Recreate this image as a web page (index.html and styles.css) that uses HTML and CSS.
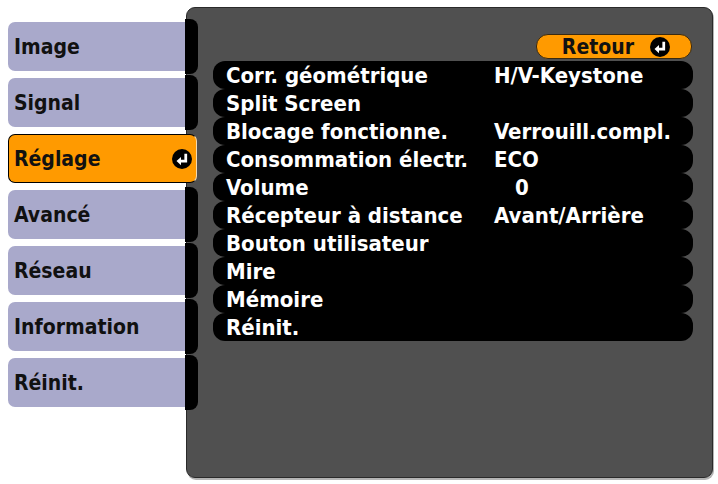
FILE: index.html
```html
<!DOCTYPE html>
<html lang="fr">
<head>
    <meta charset="UTF-8">
    <title>Réglage</title>
    <link rel="stylesheet" href="styles.css">
</head>
<body>
    <div class="screen">
        <ul class="tabs">
            <li class="tab"><span class="label">Image</span><span class="tail"></span></li>
            <li class="tab"><span class="label">Signal</span><span class="tail"></span></li>
            <li class="tab on"><span class="label">Réglage
                <svg class="enter" viewBox="0 0 16 16"><circle cx="8" cy="8" r="8"/><path d="M11 3.8V9.6H6.5" /><polygon points="3.6,9.6 7.2,6.3 7.2,12.9"/></svg>
            </span></li>
            <li class="tab"><span class="label">Avancé</span><span class="tail"></span></li>
            <li class="tab"><span class="label">Réseau</span><span class="tail"></span></li>
            <li class="tab"><span class="label">Information</span><span class="tail"></span></li>
            <li class="tab"><span class="label">Réinit.</span><span class="tail"></span></li>
        </ul>
        <div class="panel">
            <div class="retour">Retour
                <svg class="enter" viewBox="0 0 16 16"><circle cx="8" cy="8" r="8"/><path d="M11 3.8V9.6H6.5" /><polygon points="3.6,9.6 7.2,6.3 7.2,12.9"/></svg>
            </div>
            <ul class="rows">
                <li><span class="name">Corr. géométrique</span><span class="val">H/V-Keystone</span></li>
                <li><span class="name">Split Screen</span></li>
                <li><span class="name">Blocage fonctionne.</span><span class="val">Verrouill.compl.</span></li>
                <li><span class="name">Consommation électr.</span><span class="val">ECO</span></li>
                <li><span class="name">Volume</span><span class="val num">0</span></li>
                <li><span class="name">Récepteur à distance</span><span class="val">Avant/Arrière</span></li>
                <li><span class="name">Bouton utilisateur</span></li>
                <li><span class="name">Mire</span></li>
                <li><span class="name">Mémoire</span></li>
                <li><span class="name">Réinit.</span></li>
            </ul>
        </div>
    </div>
</body>
</html>
```
FILE: styles.css
```css
*{
    margin:0;
    padding:0;
}
ul li{
    list-style-type:none;
}
body{
    background:#fff;
    font-family:"DejaVu Sans Condensed","DejaVu Sans",sans-serif;
    font-weight:bold;
}
.screen{
    display:flex;
    padding:7px 5px 6px 8px;
    height:471px;
}
.tabs{
    width:190px;
    margin-top:15px;
    display:flex;
    flex-direction:column;
    gap:7px;
    position:relative;
    z-index:1;
}
.tab{
    display:flex;
    height:49px;
}
.tab .label{
    flex:1;
    display:flex;
    align-items:center;
    justify-content:space-between;
    padding-left:6px;
    background:#a9a9cb;
    color:#111;
    font-size:21px;
    border-radius:7px 0 0 7px;
}
.tab .tail{
    width:13px;
    margin:-3px 0;
    background:#000;
    border-radius:0 8px 8px 0;
}
.tab.on .label{
    background:#ff9a00;
    border:1px solid #000;
    border-right-color:#f4d9b0;
    border-radius:7px;
    margin-right:1px;
    padding-left:5px;
    padding-right:4px;
}
.enter{
    width:20px;
    height:20px;
    flex-shrink:0;
}
.enter circle{
    fill:#000;
}
.enter path{
    fill:none;
    stroke:#fff;
    stroke-width:2.2;
}
.enter polygon{
    fill:#fff;
}
.panel{
    flex:1;
    margin-left:-12px;
    background:#505050;
    border:1px solid #2a2a2a;
    border-radius:9px;
    box-shadow:1px 2px 0 #b4b4b4;
    padding:26px 19px 0 26px;
    display:flex;
    flex-direction:column;
}
.retour{
    align-self:flex-end;
    margin-right:1px;
    height:25px;
    display:flex;
    align-items:center;
    gap:16px;
    padding:0 21px 0 20px;
    background:#ff9a00;
    border:1px solid #3a2a10;
    border-radius:12px;
    color:#111;
    font-size:21px;
    box-sizing:border-box;
    width:156px;
    justify-content:flex-end;
}
.rows{
    margin-top:2px;
}
.rows li{
    height:28px;
    display:flex;
    align-items:center;
    padding-left:13px;
    background:#000;
    border-radius:12px;
    color:#fff;
    font-size:22px;
}
.rows .name{
    width:268px;
}
.rows .num{
    padding-left:21px;
}
```
